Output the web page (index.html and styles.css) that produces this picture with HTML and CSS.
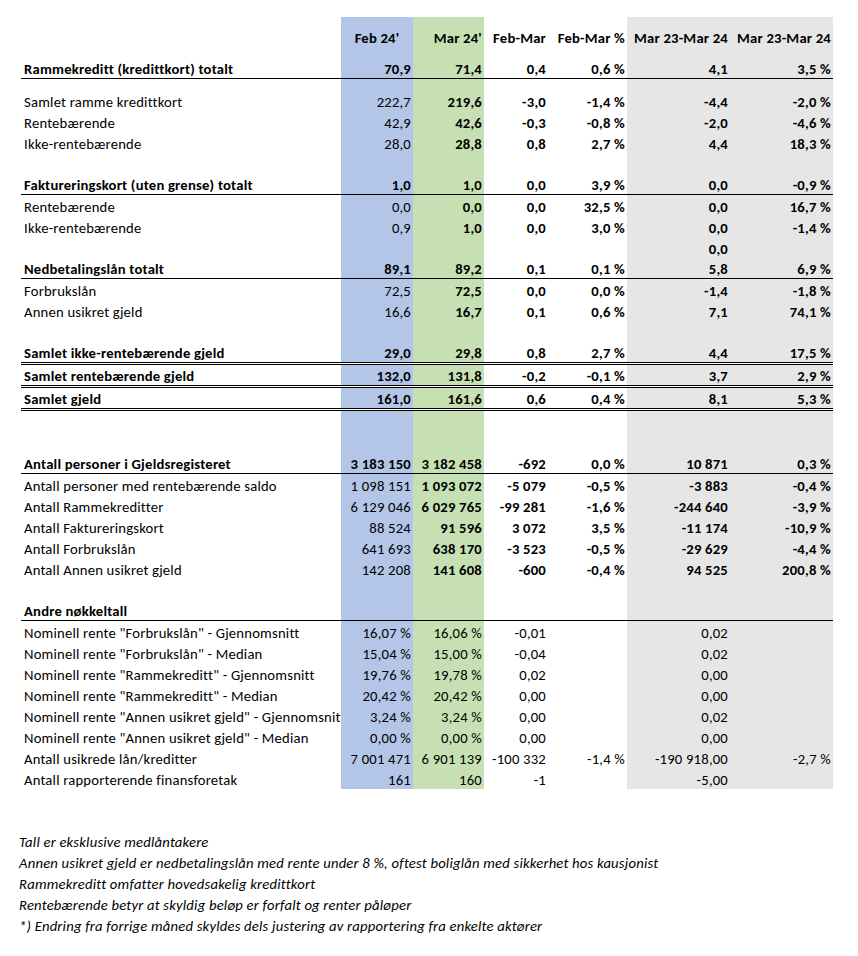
FILE: index.html
```html
<!DOCTYPE html>
<html lang="no">
<head>
<meta charset="utf-8">
<title>Gjeldsregisteret</title>
<link rel="stylesheet" href="styles.css">
</head>
<body>
<div class="sheet">
  <div class="row head">
    <div class="c lab"></div>
    <div class="c blue center">Feb 24'</div>
    <div class="c green">Mar 24'</div>
    <div class="c">Feb-Mar</div>
    <div class="c">Feb-Mar %</div>
    <div class="c gray">Mar 23-Mar 24</div>
    <div class="c gray">Mar 23-Mar 24</div>
  </div>

  <div class="row b1 bold">
    <div class="c lab">Rammekreditt (kredittkort) totalt</div>
    <div class="c blue">70,9</div><div class="c green">71,4</div><div class="c">0,4</div><div class="c">0,6 %</div><div class="c gray">4,1</div><div class="c gray">3,5 %</div>
  </div>
  <div class="row spacer">
    <div class="c lab"></div><div class="c blue"></div><div class="c green"></div><div class="c"></div><div class="c"></div><div class="c gray"></div><div class="c gray"></div>
  </div>
  <div class="row">
    <div class="c lab">Samlet ramme kredittkort</div>
    <div class="c blue">222,7</div><div class="c green b">219,6</div><div class="c b">-3,0</div><div class="c b">-1,4 %</div><div class="c gray b">-4,4</div><div class="c gray b">-2,0 %</div>
  </div>
  <div class="row">
    <div class="c lab">Rentebærende</div>
    <div class="c blue">42,9</div><div class="c green b">42,6</div><div class="c b">-0,3</div><div class="c b">-0,8 %</div><div class="c gray b">-2,0</div><div class="c gray b">-4,6 %</div>
  </div>
  <div class="row">
    <div class="c lab">Ikke-rentebærende</div>
    <div class="c blue">28,0</div><div class="c green b">28,8</div><div class="c b">0,8</div><div class="c b">2,7 %</div><div class="c gray b">4,4</div><div class="c gray b">18,3 %</div>
  </div>
  <div class="row">
    <div class="c lab"></div><div class="c blue"></div><div class="c green"></div><div class="c"></div><div class="c"></div><div class="c gray"></div><div class="c gray"></div>
  </div>

  <div class="row b1 bold">
    <div class="c lab">Faktureringskort (uten grense) totalt</div>
    <div class="c blue">1,0</div><div class="c green">1,0</div><div class="c">0,0</div><div class="c">3,9 %</div><div class="c gray">0,0</div><div class="c gray">-0,9 %</div>
  </div>
  <div class="row">
    <div class="c lab">Rentebærende</div>
    <div class="c blue">0,0</div><div class="c green b">0,0</div><div class="c b">0,0</div><div class="c b">32,5 %</div><div class="c gray b">0,0</div><div class="c gray b">16,7 %</div>
  </div>
  <div class="row">
    <div class="c lab">Ikke-rentebærende</div>
    <div class="c blue">0,9</div><div class="c green b">1,0</div><div class="c b">0,0</div><div class="c b">3,0 %</div><div class="c gray b">0,0</div><div class="c gray b">-1,4 %</div>
  </div>
  <div class="row">
    <div class="c lab"></div><div class="c blue"></div><div class="c green"></div><div class="c"></div><div class="c"></div><div class="c gray b">0,0</div><div class="c gray"></div>
  </div>

  <div class="row b1 bold">
    <div class="c lab">Nedbetalingslån totalt</div>
    <div class="c blue">89,1</div><div class="c green">89,2</div><div class="c">0,1</div><div class="c">0,1 %</div><div class="c gray">5,8</div><div class="c gray">6,9 %</div>
  </div>
  <div class="row">
    <div class="c lab">Forbrukslån</div>
    <div class="c blue">72,5</div><div class="c green b">72,5</div><div class="c b">0,0</div><div class="c b">0,0 %</div><div class="c gray b">-1,4</div><div class="c gray b">-1,8 %</div>
  </div>
  <div class="row">
    <div class="c lab">Annen usikret gjeld</div>
    <div class="c blue">16,6</div><div class="c green b">16,7</div><div class="c b">0,1</div><div class="c b">0,6 %</div><div class="c gray b">7,1</div><div class="c gray b">74,1 %</div>
  </div>
  <div class="row">
    <div class="c lab"></div><div class="c blue"></div><div class="c green"></div><div class="c"></div><div class="c"></div><div class="c gray"></div><div class="c gray"></div>
  </div>

  <div class="row b2 bold">
    <div class="c lab">Samlet ikke-rentebærende gjeld</div>
    <div class="c blue">29,0</div><div class="c green">29,8</div><div class="c">0,8</div><div class="c">2,7 %</div><div class="c gray">4,4</div><div class="c gray">17,5 %</div>
  </div>
  <div class="row b2 bold">
    <div class="c lab">Samlet rentebærende gjeld</div>
    <div class="c blue">132,0</div><div class="c green">131,8</div><div class="c">-0,2</div><div class="c">-0,1 %</div><div class="c gray">3,7</div><div class="c gray">2,9 %</div>
  </div>
  <div class="row b2 bold">
    <div class="c lab">Samlet gjeld</div>
    <div class="c blue">161,0</div><div class="c green">161,6</div><div class="c">0,6</div><div class="c">0,4 %</div><div class="c gray">8,1</div><div class="c gray">5,3 %</div>
  </div>
  <div class="row">
    <div class="c lab"></div><div class="c blue"></div><div class="c green"></div><div class="c"></div><div class="c"></div><div class="c gray"></div><div class="c gray"></div>
  </div>
  <div class="row">
    <div class="c lab"></div><div class="c blue"></div><div class="c green"></div><div class="c"></div><div class="c"></div><div class="c gray"></div><div class="c gray"></div>
  </div>

  <div class="row b1 bold">
    <div class="c lab">Antall personer i Gjeldsregisteret</div>
    <div class="c blue">3 183 150</div><div class="c green">3 182 458</div><div class="c">-692</div><div class="c">0,0 %</div><div class="c gray">10 871</div><div class="c gray">0,3 %</div>
  </div>
  <div class="row">
    <div class="c lab">Antall personer med rentebærende saldo</div>
    <div class="c blue">1 098 151</div><div class="c green b">1 093 072</div><div class="c b">-5 079</div><div class="c b">-0,5 %</div><div class="c gray b">-3 883</div><div class="c gray b">-0,4 %</div>
  </div>
  <div class="row">
    <div class="c lab">Antall Rammekreditter</div>
    <div class="c blue">6 129 046</div><div class="c green b">6 029 765</div><div class="c b">-99 281</div><div class="c b">-1,6 %</div><div class="c gray b">-244 640</div><div class="c gray b">-3,9 %</div>
  </div>
  <div class="row">
    <div class="c lab">Antall Faktureringskort</div>
    <div class="c blue">88 524</div><div class="c green b">91 596</div><div class="c b">3 072</div><div class="c b">3,5 %</div><div class="c gray b">-11 174</div><div class="c gray b">-10,9 %</div>
  </div>
  <div class="row">
    <div class="c lab">Antall Forbrukslån</div>
    <div class="c blue">641 693</div><div class="c green b">638 170</div><div class="c b">-3 523</div><div class="c b">-0,5 %</div><div class="c gray b">-29 629</div><div class="c gray b">-4,4 %</div>
  </div>
  <div class="row">
    <div class="c lab">Antall Annen usikret gjeld</div>
    <div class="c blue">142 208</div><div class="c green b">141 608</div><div class="c b">-600</div><div class="c b">-0,4 %</div><div class="c gray b">94 525</div><div class="c gray b">200,8 %</div>
  </div>
  <div class="row">
    <div class="c lab"></div><div class="c blue"></div><div class="c green"></div><div class="c"></div><div class="c"></div><div class="c gray"></div><div class="c gray"></div>
  </div>

  <div class="row b1">
    <div class="c lab b">Andre nøkkeltall</div>
    <div class="c blue"></div><div class="c green"></div><div class="c"></div><div class="c"></div><div class="c gray"></div><div class="c gray"></div>
  </div>
  <div class="row">
    <div class="c lab">Nominell rente "Forbrukslån" - Gjennomsnitt</div>
    <div class="c blue">16,07 %</div><div class="c green">16,06 %</div><div class="c">-0,01</div><div class="c"></div><div class="c gray">0,02</div><div class="c gray"></div>
  </div>
  <div class="row">
    <div class="c lab">Nominell rente "Forbrukslån" - Median</div>
    <div class="c blue">15,04 %</div><div class="c green">15,00 %</div><div class="c">-0,04</div><div class="c"></div><div class="c gray">0,02</div><div class="c gray"></div>
  </div>
  <div class="row">
    <div class="c lab">Nominell rente "Rammekreditt" - Gjennomsnitt</div>
    <div class="c blue">19,76 %</div><div class="c green">19,78 %</div><div class="c">0,02</div><div class="c"></div><div class="c gray">0,00</div><div class="c gray"></div>
  </div>
  <div class="row">
    <div class="c lab">Nominell rente "Rammekreditt" - Median</div>
    <div class="c blue">20,42 %</div><div class="c green">20,42 %</div><div class="c">0,00</div><div class="c"></div><div class="c gray">0,00</div><div class="c gray"></div>
  </div>
  <div class="row">
    <div class="c lab">Nominell rente "Annen usikret gjeld" - Gjennomsnitt</div>
    <div class="c blue">3,24 %</div><div class="c green">3,24 %</div><div class="c">0,00</div><div class="c"></div><div class="c gray">0,02</div><div class="c gray"></div>
  </div>
  <div class="row">
    <div class="c lab">Nominell rente "Annen usikret gjeld" - Median</div>
    <div class="c blue">0,00 %</div><div class="c green">0,00 %</div><div class="c">0,00</div><div class="c"></div><div class="c gray">0,00</div><div class="c gray"></div>
  </div>
  <div class="row">
    <div class="c lab">Antall usikrede lån/kreditter</div>
    <div class="c blue">7 001 471</div><div class="c green">6 901 139</div><div class="c">-100 332</div><div class="c">-1,4 %</div><div class="c gray">-190 918,00</div><div class="c gray">-2,7 %</div>
  </div>
  <div class="row">
    <div class="c lab">Antall rapporterende finansforetak</div>
    <div class="c blue">161</div><div class="c green">160</div><div class="c">-1</div><div class="c"></div><div class="c gray">-5,00</div><div class="c gray"></div>
  </div>
</div>

<div class="notes">
  <p>Tall er eksklusive medlåntakere</p>
  <p>Annen usikret gjeld er nedbetalingslån med rente under 8 %, oftest boliglån med sikkerhet hos kausjonist</p>
  <p>Rammekreditt omfatter hovedsakelig kredittkort</p>
  <p>Rentebærende betyr at skyldig beløp er forfalt og renter påløper</p>
  <p>*) Endring fra forrige måned skyldes dels justering av rapportering fra enkelte aktører</p>
</div>
</body>
</html>
```

FILE: styles.css
```css
html, body {
  margin: 0;
  padding: 0;
  background: #ffffff;
}

body {
  font-family: Carlito, Calibri, Lato, "Liberation Sans", sans-serif;
  font-size: 14.67px;
  letter-spacing: 0.2px;
  color: #000000;
}

.sheet {
  margin: 17px 0 0 21px;
  width: 812px;
}

.row {
  display: grid;
  grid-template-columns: 320px 72px 71px 64px 79px 103px 103px;
  height: 21px;
  box-sizing: border-box;
}

.row.head {
  height: 41px;
  font-weight: bold;
}

.row.spacer {
  height: 11px;
}

.row.b1 {
  border-bottom: 1px solid #000;
}

.row.b2 {
  height: 23px;
  border-bottom: 3px double #000;
}

.bold .c,
.c.b {
  font-weight: bold;
}

.c {
  display: flex;
  align-items: center;
  justify-content: flex-end;
  padding-top: 2px;
  padding-right: 2px;
  white-space: nowrap;
  overflow: hidden;
  min-width: 0;
}

.row.head .c {
  padding-top: 0;
}

.c.lab {
  justify-content: flex-start;
  padding-left: 3px;
  padding-right: 0;
}

.c.center {
  justify-content: center;
  padding-right: 0;
}

.blue { background: #B4C6E7; }
.green { background: #C6E0B4; }
.gray { background: #E7E6E6; }

.notes {
  margin-top: 43px;
  padding-left: 19px;
  font-style: italic;
}

.notes p {
  margin: 0;
  height: 21px;
  line-height: 21px;
  white-space: nowrap;
}
```
